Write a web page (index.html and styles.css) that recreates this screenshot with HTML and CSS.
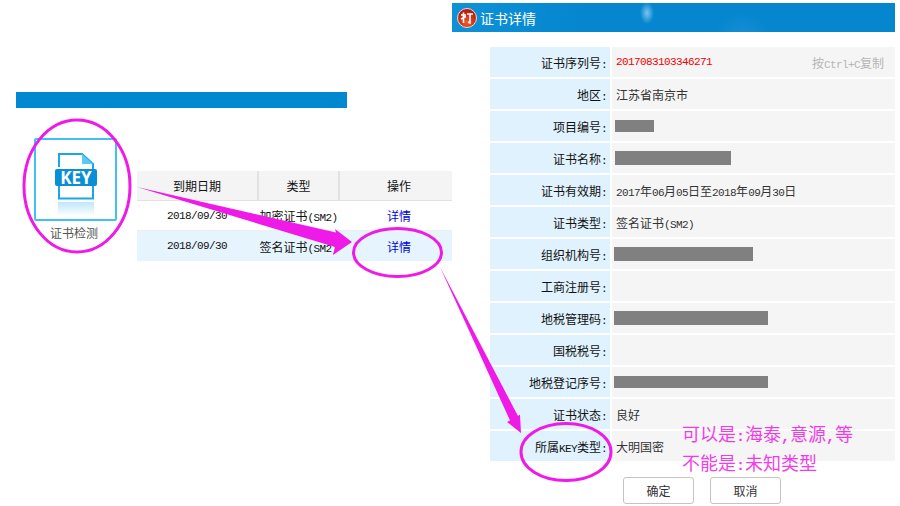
FILE: index.html
```html
<!DOCTYPE html>
<html lang="zh">
<head>
<meta charset="utf-8">
<title>证书详情</title>
<link rel="stylesheet" href="styles.css">
</head>
<body>
<div class="page">
  <section class="left">
    <div class="bar"></div>
    <div class="left-body">
      <div class="tile">
        <div class="tile-box">
          <svg class="key-icon" width="44" height="66" viewBox="0 0 44 66">
            <defs>
              <linearGradient id="fade" x1="0" y1="0" x2="0" y2="1">
                <stop offset="0" stop-color="#bfe6fa"/>
                <stop offset="1" stop-color="#ffffff"/>
              </linearGradient>
            </defs>
            <path d="M5 15V2H28L39 12V46.500H5V34" fill="#fff" stroke="#1ba7e6" stroke-width="2"/>
            <path d="M28 2L39 12H28Z" fill="#5cc8f4"/>
            <rect x="1" y="17" width="42" height="17" rx="2" fill="#0a8fd6"/>
            <text class="key-text" x="22" y="32" text-anchor="middle">KEY</text>
            <rect x="4" y="50" width="36" height="14" fill="url(#fade)"/>
          </svg>
        </div>
        <div class="tile-label">证书检测</div>
      </div>
      <div class="cert-table">
        <div class="t-row t-head">
          <div class="c c1">到期日期</div>
          <div class="c c2">类型</div>
          <div class="c c3">操作</div>
        </div>
        <div class="t-row">
          <div class="c c1"><span class="num">2018/09/30</span></div>
          <div class="c c2"><span>加密证书<span class="num">(SM2)</span></span></div>
          <div class="c c3"><a class="link">详情</a></div>
        </div>
        <div class="t-row t-sel">
          <div class="c c1"><span class="num">2018/09/30</span></div>
          <div class="c c2"><span>签名证书<span class="num">(SM2)</span></span></div>
          <div class="c c3"><a class="link">详情</a></div>
        </div>
      </div>
    </div>
  </section>

  <section class="dialog">
    <header class="dlg-head">
      <svg width="20" height="20" viewBox="0 0 20 20">
        <defs>
          <radialGradient id="ball" cx="0.5" cy="0.75" r="0.7">
            <stop offset="0" stop-color="#ee5a2a"/>
            <stop offset="1" stop-color="#b5140e"/>
          </radialGradient>
        </defs>
        <circle cx="10" cy="10" r="9.500" fill="url(#ball)" stroke="#f4d9c8"/>
        <path d="M4 7H9M6.500 4.500V15M4 11L9 8.500M10 6H16M13 6V15L11 14" fill="none" stroke="#fff" stroke-width="1.600"/>
      </svg>
      <span class="dlg-title">证书详情</span>
    </header>
    <div class="form">
      <div class="lab"><span>证书序列号<span class="num">:</span></span></div><div class="val between"><span class="num red">2017083103346271</span><span class="hint">按<span class="num">Ctrl+C</span>复制</span></div>
      <div class="lab"><span>地区<span class="num">:</span></span></div><div class="val">江苏省南京市</div>
      <div class="lab"><span>项目编号<span class="num">:</span></span></div><div class="val"><i class="mask w39"></i></div>
      <div class="lab"><span>证书名称<span class="num">:</span></span></div><div class="val"><i class="mask w116"></i></div>
      <div class="lab"><span>证书有效期<span class="num">:</span></span></div><div class="val"><span><span class="num">2017</span>年<span class="num">06</span>月<span class="num">05</span>日至<span class="num">2018</span>年<span class="num">09</span>月<span class="num">30</span>日</span></div>
      <div class="lab"><span>证书类型<span class="num">:</span></span></div><div class="val"><span>签名证书<span class="num">(SM2)</span></span></div>
      <div class="lab"><span>组织机构号<span class="num">:</span></span></div><div class="val"><i class="mask w139"></i></div>
      <div class="lab"><span>工商注册号<span class="num">:</span></span></div><div class="val"></div>
      <div class="lab"><span>地税管理码<span class="num">:</span></span></div><div class="val"><i class="mask w154"></i></div>
      <div class="lab"><span>国税税号<span class="num">:</span></span></div><div class="val"></div>
      <div class="lab"><span>地税登记序号<span class="num">:</span></span></div><div class="val"><i class="mask w154 short"></i></div>
      <div class="lab"><span>证书状态<span class="num">:</span></span></div><div class="val">良好</div>
      <div class="lab"><span>所属<span class="num">KEY</span>类型<span class="num">:</span></span></div><div class="val">大明国密</div>
    </div>
    <div class="actions">
      <button class="btn">确定</button>
      <button class="btn">取消</button>
    </div>
  </section>

  <svg class="marks" width="900" height="506" viewBox="0 0 900 506">
    <ellipse cx="77" cy="186" rx="53" ry="66" fill="none" stroke="#f01ae8" stroke-width="3"/>
    <ellipse cx="397.500" cy="252.500" rx="44" ry="24" fill="none" stroke="#f01ae8" stroke-width="3"/>
    <ellipse cx="566" cy="452" rx="45" ry="28.500" fill="none" stroke="#f01ae8" stroke-width="3"/>
    <path d="M137 187L336 232.500L335 229L352 242L333 255L335 247Z" fill="#f01ae8"/>
    <path d="M440 267L518 416L520 414.500L521 433L507 422L510 420.500Z" fill="#f01ae8"/>
  </svg>
  <div class="note">
    <div>可以是<span class="note-p">:</span>海泰<span class="note-p">,</span>意源<span class="note-p">,</span>等</div>
    <div>不能是<span class="note-p">:</span>未知类型</div>
  </div>
</div>
</body>
</html>
```

FILE: styles.css
```css
* { box-sizing: border-box; }
html, body { margin: 0; padding: 0; background: #fff; }
body {
  font-family: "Noto Sans CJK SC", "Liberation Sans", sans-serif;
  font-size: 12px;
  color: #222;
}
.page {
  position: relative;
  width: 900px;
  height: 506px;
  overflow: hidden;
  display: flex;
}
.num {
  font-family: "Liberation Mono", monospace;
  font-size: 11px;
  letter-spacing: -0.6px;
}
.left { width: 452px; padding-top: 92px; }
.bar { margin-left: 16px; width: 331px; height: 16px; background: #0088d0; }
.left-body { display: flex; margin-top: 30px; padding-left: 34px; }
.tile { width: 83px; margin-right: 20px; }
.tile-box {
  width: 83px;
  height: 83px;
  border: 2px solid #40c0f5;
  border-radius: 2px;
  display: flex;
  justify-content: center;
  padding-top: 12px;
}
.key-text {
  font-family: "Open Sans", "Liberation Sans", sans-serif;
  font-size: 17px;
  font-weight: 700;
  fill: #fff;
}
.tile-label {
  text-align: center;
  color: #555;
  font-size: 12px;
  line-height: 16px;
  margin-top: 4px;
  padding-right: 3px;
}
.cert-table { width: 315px; margin-top: 33px; }
.t-row { display: flex; height: 30px; border-bottom: 1px solid #eee; }
.t-row .c {
  display: flex;
  align-items: center;
  justify-content: center;
  color: #111;
  white-space: nowrap;
}
.c1 { width: 122px; border-right: 2px solid transparent; }
.c2 { width: 81px; border-right: 2px solid transparent; }
.c3 { width: 112px; padding-left: 6px; }
.t-head { background: #f4f4f4; border-bottom: 1px solid #e2e2e2; }
.t-head .c1, .t-head .c2 { border-right-color: #e2e2e2; }
.t-sel { background: #e6f4fe; border-bottom: 0; }
.link { color: #0000e0; }
.dialog { width: 443px; padding-top: 3px; display: flex; flex-direction: column; }
.dlg-head {
  height: 29px;
  display: flex;
  align-items: center;
  gap: 3px;
  padding-left: 5px;
  background:
    radial-gradient(ellipse 7px 11px at 195px 10px, #7cc4ee 0, rgba(124, 196, 238, 0) 100%),
    radial-gradient(circle at 290px 40px, rgba(120, 190, 235, .2) 0, rgba(120, 190, 235, 0) 30px),
    linear-gradient(100deg, #0d92d8 0, #0586cf 30%, #0586cf 100%);
}
.dlg-title { color: #fff; font-size: 14px; }
.form {
  margin: 15px 0 0 38px;
  width: 405px;
  display: grid;
  grid-template-columns: 120px 283px;
  grid-auto-rows: 30px;
  gap: 2px;
}
.lab {
  background: #dff2fd;
  display: flex;
  align-items: center;
  justify-content: flex-end;
  padding-right: 3px;
  color: #111;
  white-space: nowrap;
}
.val {
  background: #f5f5f5;
  display: flex;
  align-items: center;
  padding-left: 4px;
  color: #333;
  white-space: nowrap;
}
.between { justify-content: space-between; padding-right: 11px; }
.red { color: #f00000; }
.hint { color: #b5b5b5; }
.mask { display: block; height: 14px; background: #808080; }
.w39 { width: 39px; height: 12px; margin-left: -1px; }
.w116 { width: 116px; margin-left: -1px; }
.w139 { width: 139px; margin-left: -2px; }
.w154 { width: 154px; margin-left: -2px; }
.short { height: 12px; }
.actions { display: flex; gap: 16px; margin: 16px 0 0 171px; }
.btn {
  width: 71px;
  height: 27px;
  padding: 0;
  background: #fff;
  border: 1px solid #c4c4c4;
  border-radius: 3px;
  color: #333;
  font: inherit;
}
.marks { position: absolute; left: 0; top: 0; pointer-events: none; }
.note {
  position: absolute;
  left: 682px;
  top: 421px;
  color: #f01ae8;
  font-size: 18px;
  line-height: 24px;
  white-space: nowrap;
  opacity: .85;
}
.note-p { font-family: "Liberation Mono", monospace; font-size: 15px; font-weight: 700; }
```
